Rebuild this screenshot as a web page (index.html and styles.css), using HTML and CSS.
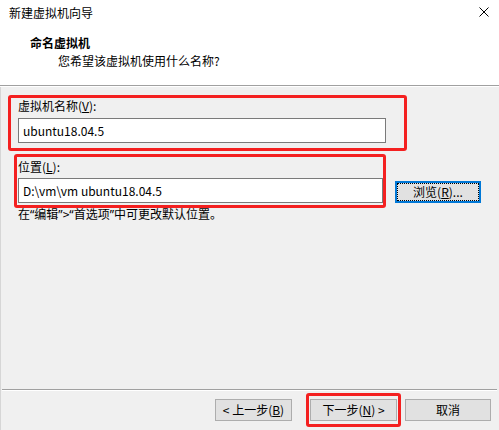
FILE: index.html
```html
<!DOCTYPE html>
<html lang="zh-CN">
<head>
<meta charset="utf-8">
<title>新建虚拟机向导</title>
<link rel="stylesheet" href="styles.css">
</head>
<body>
<div class="win">
  <header class="head">
    <div class="titlebar">
      <span class="title">新建虚拟机向导</span>
      <svg class="close" width="10" height="10" viewBox="0 0 10 10"><path d="M0.5 0.5L9.5 9.5M9.5 0.5L0.5 9.5" stroke="#000" stroke-width="1"/></svg>
    </div>
    <div class="h1">命名虚拟机</div>
    <div class="h2">您希望该虚拟机使用什么名称?</div>
  </header>
  <main class="main">
    <div class="group">
      <div class="label">虚拟机名称(<u>V</u>):</div>
      <div class="input w1">ubuntu18.04.5</div>
    </div>
    <div class="group g2">
      <div class="label">位置(<u>L</u>):</div>
      <div class="row">
        <div class="input w2">D:\vm\vm ubuntu18.04.5</div>
        <div class="btn browse"><span>浏览(<u>R</u>)...</span></div>
      </div>
    </div>
    <div class="hint">在<span class="q">“</span>编辑<span class="q">”</span>&gt;<span class="q">“</span>首选项<span class="q">”</span>中可更改默认位置。</div>
  </main>
  <footer class="foot">
    <div class="btn b1">&lt; 上一步(<u>B</u>)</div>
    <div class="btn b2">下一步(<u>N</u>) &gt;</div>
    <div class="btn b3">取消</div>
  </footer>
  <div class="mark m1"></div>
  <div class="mark m2"></div>
  <div class="mark m3"></div>
</div>
</body>
</html>
```
FILE: styles.css
```css
* { box-sizing: border-box; }
html, body { margin: 0; padding: 0; }
body {
  font-family: "Noto Sans CJK SC", "Noto Sans", sans-serif;
  font-size: 12px;
  color: #000;
  background: #f0f0f0;
}
.win {
  position: relative;
  width: 499px;
  height: 430px;
  display: flex;
  flex-direction: column;
  border-left: 1px solid #d6d6d6;
  background: #f0f0f0;
}
.head {
  height: 86px;
  background: #fff;
  border-bottom: 1px solid #a0a0a0;
  box-shadow: 0 1px 0 #fff;
  margin-left: -1px;
  padding-left: 1px;
}
.titlebar {
  height: 26px;
  display: flex;
  align-items: center;
  justify-content: space-between;
  padding: 0 10px 0 8px;
}
.title { line-height: 16px; }
.close { display: block; margin-top: -2px; }
.h1 {
  margin-top: 8px;
  padding-left: 29px;
  font-weight: bold;
  line-height: 18px;
}
.h2 {
  padding-left: 57px;
  line-height: 18px;
}
.main {
  flex: 1;
  padding: 12px 0 0 17px;
}
.label { line-height: 16px; height: 16px; }
.input {
  height: 25px;
  margin-top: 4px;
  background: #fff;
  border: 1px solid #7a7a7a;
  padding-left: 4px;
  line-height: 23px;
}
.w1 { width: 368px; }
.g2 { margin-top: 16px; }
.g2 .input { margin-top: 3px; }
.w2 { width: 365px; }
.row { display: flex; align-items: center; gap: 12px; }
.row .input { flex: none; }
.btn {
  height: 22px;
  background: #e1e1e1;
  border: 1px solid #adadad;
  display: flex;
  align-items: center;
  justify-content: center;
  line-height: 16px;
}
.browse {
  width: 86px;
  height: 22px;
  margin-top: 5px;
  border: 2px solid #0078d7;
  outline: 1px dotted #000;
  outline-offset: -3px;
}
.hint { line-height: 16px; margin-top: 3px; }
.q { font-family: "Noto Sans", "DejaVu Sans", sans-serif; }
.foot {
  height: 41px;
  margin: 0 2px 0 1px;
  border-top: 1px solid #a0a0a0;
  box-shadow: inset 0 1px 0 #fff;
  display: flex;
  justify-content: flex-end;
  align-items: flex-start;
  padding: 9px 6px 0 0;
}
.b1 { width: 77px; }
.b2 { width: 87px; margin-left: 18px; }
.b3 { width: 86px; margin-left: 8px; }
.mark {
  position: absolute;
  border: 3px solid #f42020;
  border-radius: 3px;
}
.m1 { left: 7px; top: 95px; width: 399px; height: 56px; }
.m2 { left: 13px; top: 154px; width: 372px; height: 54px; }
.m3 { left: 305px; top: 393px; width: 95px; height: 34px; }
```
